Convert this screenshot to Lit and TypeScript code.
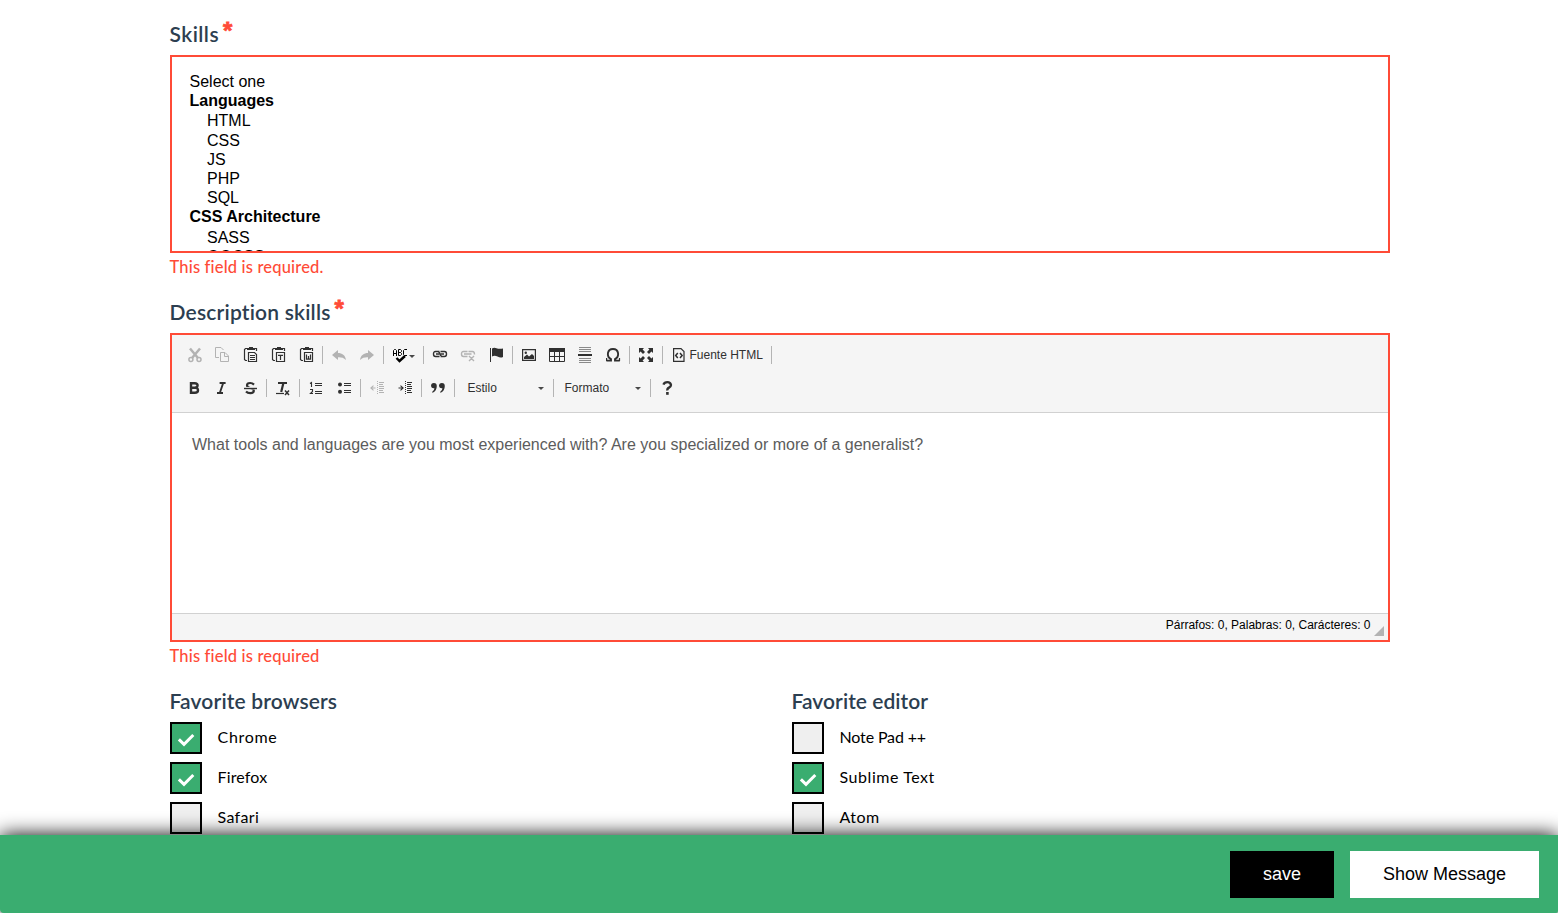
import { LitElement, html, css, svg, nothing } from "lit";
import { customElement, property } from "lit/decorators.js";

const icons: Record<string, unknown> = {
  cut: svg`<path d="M4 1.5L12 11M14 1.5L6 11" stroke="currentColor" stroke-width="2.5" fill="none"/><circle cx="4.9" cy="12.4" r="2" stroke="currentColor" stroke-width="1.5" fill="none"/><circle cx="13" cy="12.4" r="2" stroke="currentColor" stroke-width="1.5" fill="none"/>`,
  copy: svg`<path d="M5 10.5H1.5V.5H7L9.5 3M6.5 5.5H11L14.5 9V14.5H6.5ZM10.5 5.5V9.5H14.5" stroke="currentColor" fill="none"/>`,
  paste: svg`<path d="M5 1.5H3.5L2.5 2.5V12.5L3.5 13.5H5M12.5 1.5H14.5V4" stroke="currentColor" stroke-width="1.2" fill="none"/><path d="M5 1H7V0H11V1H13V3H5Z"/><path d="M6.5 5.5H12.5L14.5 7.5V14.5H6.5ZM8 8.5H13M8 10.5H13M8 12.5H13" stroke="currentColor" stroke-width="1.2" fill="none"/>`,
  pasteText: svg`<path d="M5 1.5H3.5L2.5 2.5V12.5L3.5 13.5H5M12.5 1.5H14.5V4" stroke="currentColor" stroke-width="1.2" fill="none"/><path d="M5 1H7V0H11V1H13V3H5Z"/><path d="M6.5 5.5H14.5V14.5H6.5ZM8 8.4H13M10.5 8.4V13" stroke="currentColor" stroke-width="1.2" fill="none"/>`,
  pasteWord: svg`<path d="M5 1.5H3.5L2.5 2.5V12.5L3.5 13.5H5M12.5 1.5H14.5V4" stroke="currentColor" stroke-width="1.2" fill="none"/><path d="M5 1H7V0H11V1H13V3H5Z"/><path d="M6.5 5.5H14.5V14.5H6.5ZM8.5 7.5V12.2H12.5V7.5M10.5 9V12" stroke="currentColor" stroke-width="1.2" fill="none"/>`,
  undo: svg`<path d="M1 8L7 3V6C11 6 14.2 8 15 13C12.5 10.6 10 10 7 10.2V13Z"/>`,
  redo: svg`<path d="M15 8L9 3V6C5 6 1.8 8 1 13C3.5 10.6 6 10 9 10.2V13Z"/>`,
  spell: svg`<path d="M1.5 9V3.5L2.5 2.5H3.5L4.5 3.5V9M1.5 6.5H4.5M6.5 2.5V8.5H8.5L9.5 7.5V6.5L8.5 5.5H6.5M8.5 5.5L9.5 4.5V3.5L8.5 2.5H6.5M15 2.5H12.5L11.5 3.5V7.5L12.5 8.5H15" stroke="#000" fill="none"/><path d="M4.5 11L7.5 14L13 9" stroke="#000" stroke-width="2.4" fill="none"/>`,
  link: svg`<path d="M7.5 4.5H3.5Q1.5 4.5 1.5 7T3.5 9.5H7.5M8.5 4.5H12.5Q14.5 4.5 14.5 7T12.5 9.5H8.5M4 7H12M6.5 5L8 6M9.5 9L8 8" stroke="currentColor" stroke-width="1.4" fill="none"/>`,
  unlink: svg`<path d="M7.5 4.5H3.5Q1.5 4.5 1.5 7T3.5 9.5H7.5M8.5 4.5H12.5Q14.5 4.5 14.5 7.5M4 7H11.5M9 9L14 14M14 9L9 14" stroke="currentColor" stroke-width="1.4" fill="none"/>`,
  flag: svg`<path d="M2.5 1V15" stroke="currentColor" stroke-width="1"/><path d="M4 1.5Q6 .2 8.5 1.2T15 1.5V10Q12.5 11.2 9.5 9.6T4 9.6Z"/>`,
  image: svg`<path d="M1 2H15V14H1ZM2.2 3.2V12.8H13.8V3.2Z" fill-rule="evenodd"/><path d="M3 12V10L6 7.5L8 9.5L11 7L13 9V12Z"/><circle cx="4.8" cy="5.8" r="1.2"/>`,
  table: svg`<path d="M0 1H16V5H0Z"/><path d="M.5 4.5H15.5V14.5H.5ZM0 9.5H16M5.5 5V15M10.5 5V15" stroke="currentColor" fill="none"/>`,
  rule: svg`<path d="M2 .5H14M2 2.5H14M2 4.5H14M2 11.5H14M2 13.5H14M2 15.5H14" stroke="#8a8a8a" fill="none"/><path d="M1 7H15V9H1Z"/>`,
  omega: svg`<path d="M1.4 13.6H6V12.2C1.2 9.8 2 2 8 2S14.8 9.8 10 12.2V13.6H14.8" stroke="currentColor" stroke-width="1.9" fill="none"/><path d="M1 11H2.2V14H1ZM13.9 11H15.1V14H13.9Z"/>`,
  maximize: svg`<path d="M1 1H6L4.6 2.6L7 5L5 7L2.6 4.6L1 6ZM15 1V6L13.4 4.6L11 7L9 5L11.4 2.6L10 1ZM1 15V10L2.6 11.4L5 9L7 11L4.6 13.4L6 15ZM15 15H10L11.4 13.4L9 11L11 9L13.4 11.4L15 10Z"/>`,
  source: svg`<path d="M3.6 1.6H11L14 4.6V14.4H3.6Z" stroke="currentColor" stroke-width="1.2" fill="none"/><path d="M7.8 6L5.7 8.5L7.8 11M10 6L12.1 8.5L10 11" stroke="currentColor" stroke-width="1.5" fill="none"/>`,
  bold: svg`<path d="M5 3.2V12.8H8.8Q12 12.8 12 10.2T9.2 7.7Q11.6 7.3 11.6 5.3T8.6 3.2ZM5 7.7H9.2" stroke="currentColor" stroke-width="2.4" fill="none"/>`,
  italic: svg`<path d="M5.6 3H11.6M3 13H9M9.2 3L5.8 13" stroke="currentColor" stroke-width="1.9" fill="none"/>`,
  strike: svg`<path d="M12 4.6Q10.4 3 8.2 3Q5 3 5 5.3T8.3 8Q11.8 8.6 11.8 10.7T8.3 13.2Q5.6 13.2 4 11.5" stroke="currentColor" stroke-width="2.2" fill="none"/><path d="M2 8.2H15" stroke="#f5f5f5" stroke-width="2.5"/><path d="M2 8.5H15" stroke="currentColor" stroke-width="1.4"/>`,
  clear: svg`<path d="M3 3H12M8.4 3L6.2 12" stroke="currentColor" stroke-width="2.2" fill="none"/><path d="M1 13.5H9" stroke="currentColor" stroke-width="1.2"/><path d="M10 10.5L14 15M14 10.5L10 15" stroke="currentColor" stroke-width="1.5"/>`,
  numbered: svg`<path d="M7 3.5H14M7 5.5H14M7 11.5H14M7 13.5H14M2 3.5L3.5 2.5V7M2 9.5H4.5V11.5L2.5 13.5H5" stroke="currentColor" stroke-width="1.1" fill="none"/>`,
  bullets: svg`<path d="M8 3.5H15M8 5.5H15M8 10.5H15M8 12.5H15" stroke="currentColor" stroke-width="1.1"/><circle cx="4" cy="4.5" r="2"/><circle cx="4" cy="11.7" r="2"/>`,
  outdent: svg`<path d="M1.5 8H6.5M4.5 5.7L1.9 8L4.5 10.3" stroke="currentColor" stroke-width="1.1" fill="none"/><path d="M8.5 1V15" stroke="currentColor" stroke-dasharray="1 1"/><path d="M10 2.5H15M10 4.5H14M10 6.5H15M10 8.5H15M10 10.5H14M10 12.5H15" stroke="currentColor"/>`,
  indent: svg`<path d="M1.5 8H6.5M3.5 5.7L6.1 8L3.5 10.3" stroke="currentColor" stroke-width="1.1" fill="none"/><path d="M8.5 1V15" stroke="currentColor" stroke-dasharray="1 1"/><path d="M10 2.5H15M10 4.5H14M10 6.5H15M10 8.5H15M10 10.5H14M10 12.5H15" stroke="currentColor"/>`,
  quote: svg`<path d="M1 6A2.7 2.7 0 1 1 6.8 6Q6.8 11 2.4 13V11.5Q4.5 10 4.4 8.3Q1.3 8.6 1 6ZM9 6A2.7 2.7 0 1 1 14.8 6Q14.8 11 10.4 13V11.5Q12.5 10 12.4 8.3Q9.3 8.6 9 6Z"/>`,
  help: svg`<path d="M4.4 4.6Q5.4 2.2 8.4 2.2T12 5Q12 6.6 10 7.6T8.4 10.4" stroke="currentColor" stroke-width="2.3" fill="none"/><path d="M7.1 12H9.7V14.8H7.1Z"/>`,
};

@customElement("tool-icon")
class ToolIcon extends LitElement {
  @property() name = "";
  @property({ type: Boolean }) off = false;
  static styles = css`
    :host { display: flex; width: 16px; height: 16px; padding: 0 6px; color: #303030; }
    :host([off]) { color: #b3b3b3; }
    svg { display: block; width: 16px; height: 16px; fill: currentColor; }
  `;
  render() {
    return html`<svg viewBox="0 0 16 16">${icons[this.name]}</svg>`;
  }
}

@customElement("check-option")
class CheckOption extends LitElement {
  @property() label = "";
  @property({ type: Boolean }) checked = false;
  @property({ type: Number }) tracking = 0;
  static styles = css`
    :host { display: flex; height: 32px; gap: 15.5px; margin-bottom: 8px; font: 16px/30px Lato, sans-serif; color: #000; }
    .box { box-sizing: border-box; width: 32px; height: 32px; border: 2px solid #000; background: #efefef; }
    .on { background: #3aad70; }
    svg { display: block; width: 28px; height: 28px; }
  `;
  render() {
    return html`<span class="box ${this.checked ? "on" : ""}">${this.checked
        ? html`<svg viewBox="0 0 28 28"><path d="M6.9 15.4L12 20.4L21.3 11" fill="none" stroke="#fff" stroke-width="3"/></svg>`
        : nothing}</span><span style="letter-spacing:${this.tracking}px">${this.label}</span>`;
  }
}

const tool = (name: string, off = false) => html`<tool-icon name=${name} ?off=${off}></tool-icon>`;
const sep = html`<i class="sep"></i>`;
const caret = html`<i class="caret"></i>`;

@customElement("app-root")
class AppRoot extends LitElement {
  static styles = css`
    :host { display: block; position: relative; height: 100vh; overflow: hidden; background: #fff; font-family: "Liberation Sans", Arial, sans-serif; }
    main { width: 1220px; padding: 22px 0 0 170px; }
    h2 { margin: 0; height: 24px; font: 600 21px/24px Lato, sans-serif; color: #2c3e50; display: flex; text-indent: -0.5px; }
    .star { font: 700 24px/24px "Liberation Sans", sans-serif; color: #ff4b37; -webkit-text-stroke: 0.8px #ff4b37; margin-left: 4.5px; margin-top: -3px; height: 20px; }
    .t1 { letter-spacing: 0.45px; }
    .t2 { letter-spacing: 0.2px; }
    .t3 { letter-spacing: 0.15px; }
    .t4 { letter-spacing: 0.05px; }
    .list { box-sizing: border-box; height: 198px; margin-top: 9px; border: 2px solid #ff4b37; padding: 15px 17.5px 0; overflow: hidden; font-size: 16px; line-height: 19.2px; color: #000; }
    .group { font-weight: 700; padding-bottom: 1px; }
    .opt { padding-left: 17.5px; }
    .error { color: #ff4b37; font: 500 16.5px/20px Lato, sans-serif; margin-top: 4px; height: 20px; letter-spacing: 0.17px; text-indent: -0.5px; }
    .desc { margin-top: 23px; }
    .desc + .editor { margin-top: 9px; }
    .editor { box-sizing: border-box; height: 309px; border: 2px solid #ff4b37; display: flex; flex-direction: column; }
    .bar { box-sizing: border-box; height: 78px; background: #f5f5f5; border-bottom: 1px solid #d1d1d1; padding: 10px 8px 0; display: flex; flex-direction: column; gap: 13px; }
    .row { display: flex; height: 20px; align-items: center; font-size: 12px; color: #303030; }
    .sep { width: 1px; height: 18px; margin: 0 2px; background: #b4b4b4; }
    .caret { border: 3px solid transparent; border-top-color: #484848; border-bottom: 0; }
    .spell { display: flex; align-items: center; width: 35px; }
    .spell .caret { margin-left: -5px; margin-top: 2px; }
    .source { display: flex; align-items: center; width: 104px; margin-left: -1px; margin-right: 1px; }
    .source span { margin-left: -2.5px; }
    .combo { box-sizing: border-box; display: flex; align-items: center; justify-content: space-between; width: 94px; padding: 0 7px 0 10.5px; }
    .combo.fmt { width: 92px; padding: 0 7px 0 8.5px; }
    .body { flex: 1; padding: 22px 20px; font-size: 16px; line-height: 19px; color: #5c5c5c; }
    .status { box-sizing: border-box; height: 27px; border-top: 1px solid #d1d1d1; background: #f5f5f5; padding-right: 4px; display: flex; justify-content: flex-end; font-size: 12px; line-height: 22px; color: #000; }
    .grip { width: 0; height: 0; margin: 12px 0 0 3.5px; border: 5px solid transparent; border-right-color: #b3b3b3; border-bottom-color: #b3b3b3; }
    .cols { display: grid; grid-template-columns: 622px 1fr; margin-top: 23px; }
    .cols h2 { margin-bottom: 9px; }
    footer { position: absolute; left: 0; right: 0; bottom: 0; box-sizing: border-box; height: 78px; background: #3aad70; box-shadow: 0 0 20px #000; display: flex; justify-content: flex-end; gap: 16px; padding: 16px 19px 0 0; border-radius: 0 0 2px 4px; }
    button { width: 104px; height: 47px; border: 0; padding: 0 0 1px; font: 18px "Liberation Sans", sans-serif; color: #fff; background: #000; }
    .light { width: 189px; background: #fff; color: #000; }
  `;
  render() {
    return html`<main>
        <h2><span class="t1">Skills</span><span class="star">*</span></h2>
        <div class="list">
          <div>Select one</div>
          <div class="group">Languages</div>
          ${["HTML", "CSS", "JS", "PHP", "SQL"].map((o) => html`<div class="opt">${o}</div>`)}
          <div class="group">CSS Architecture</div>
          ${["SASS", "OOCSS"].map((o) => html`<div class="opt">${o}</div>`)}
        </div>
        <div class="error">This field is required.</div>
        <h2 class="desc"><span class="t2">Description skills</span><span class="star">*</span></h2>
        <div class="editor">
          <div class="bar">
            <div class="row">
              ${tool("cut", true)}${tool("copy", true)}${tool("paste")}${tool("pasteText")}${tool("pasteWord")}${sep}
              ${tool("undo", true)}${tool("redo", true)}${sep}
              <div class="spell">${tool("spell")}${caret}</div>${sep}
              ${tool("link")}${tool("unlink", true)}${tool("flag")}${sep}
              ${tool("image")}${tool("table")}${tool("rule")}${tool("omega")}${sep}
              ${tool("maximize")}${sep}
              <div class="source">${tool("source")}<span>Fuente HTML</span></div>${sep}
            </div>
            <div class="row">
              ${tool("bold")}${tool("italic")}${tool("strike")}${sep}${tool("clear")}${sep}
              ${tool("numbered")}${tool("bullets")}${sep}${tool("outdent", true)}${tool("indent")}${sep}
              ${tool("quote")}${sep}<div class="combo">Estilo${caret}</div>${sep}
              <div class="combo fmt">Formato${caret}</div>${sep}${tool("help")}
            </div>
          </div>
          <div class="body">What tools and languages are you most experienced with? Are you specialized or more of a generalist?</div>
          <div class="status"><span>Párrafos: 0, Palabras: 0, Carácteres: 0</span><i class="grip"></i></div>
        </div>
        <div class="error">This field is required</div>
        <div class="cols">
          <section>
            <h2><span class="t3">Favorite browsers</span></h2>
            <check-option label="Chrome" checked tracking="0.7"></check-option>
            <check-option label="Firefox" checked tracking="0.15"></check-option>
            <check-option label="Safari" tracking="0.35"></check-option>
          </section>
          <section>
            <h2><span class="t4">Favorite editor</span></h2>
            <check-option label="Note Pad ++" tracking="-0.15"></check-option>
            <check-option label="Sublime Text" checked tracking="0.55"></check-option>
            <check-option label="Atom" tracking="0.5"></check-option>
          </section>
        </div>
      </main>
      <footer><button>save</button><button class="light">Show Message</button></footer>`;
  }
}
